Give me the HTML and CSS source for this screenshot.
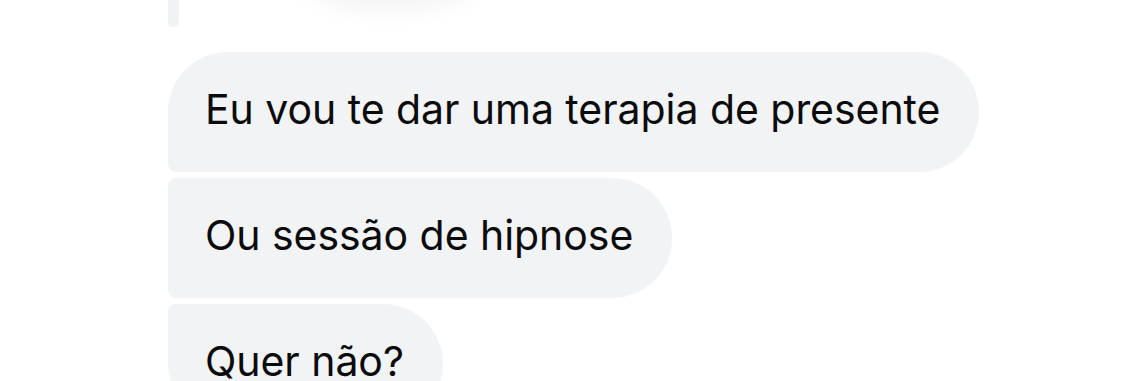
FILE: index.html
```html
<!DOCTYPE html>
<html lang="pt">
<head>
    <meta charset="UTF-8">
    <meta name="viewport" content="width=device-width, initial-scale=1.0">
    <title>Conversa</title>
    <link rel="stylesheet" href="styles.css">
</head>
<body>
    <div class="thread">
        <div class="prev-message">
            <div class="prev-bar"></div>
            <div class="sticker"></div>
        </div>

        <div class="group">
            <div class="bubble first">Eu vou te dar uma terapia de presente</div>
            <div class="bubble middle">Ou sessão de hipnose</div>
            <div class="bubble last">Quer não?</div>
        </div>
    </div>
</body>
</html>
```

FILE: styles.css
```css
body {
    margin: 0;
    padding: 0;
    background-color: #ffffff;
    font-family: Inter, "Noto Sans", sans-serif;
    overflow: hidden;
    height: 381px;
}

.thread {
    padding-left: 168px;
}

.prev-message {
    display: flex;
    height: 28px;
    margin-bottom: 24px;
    overflow: hidden;
}

.prev-bar {
    width: 11px;
    height: 27px;
    background-color: #f1f2f4;
    border-radius: 0 0 6px 6px;
}

.sticker {
    width: 170px;
    height: 60px;
    margin-top: -62px;
    margin-left: 125px;
    background-color: #ffffff;
    border-radius: 50%;
    box-shadow: 0 10px 26px rgba(0, 0, 0, 0.06);
}

.group {
    display: flex;
    flex-direction: column;
    align-items: flex-start;
    gap: 6px;
}

.bubble {
    background-color: #f2f3f5;
    color: #0b0b0c;
    font-size: 41px;
    letter-spacing: -0.05px;
    height: 120px;
    box-sizing: border-box;
    display: flex;
    align-items: center;
    padding: 0 39px 6px 37px;
    white-space: nowrap;
}

.bubble.first {
    border-radius: 60px 60px 60px 8px;
}

.bubble.middle {
    border-radius: 8px 60px 60px 8px;
}

.bubble.last {
    border-radius: 8px 60px 60px 60px;
}
```
